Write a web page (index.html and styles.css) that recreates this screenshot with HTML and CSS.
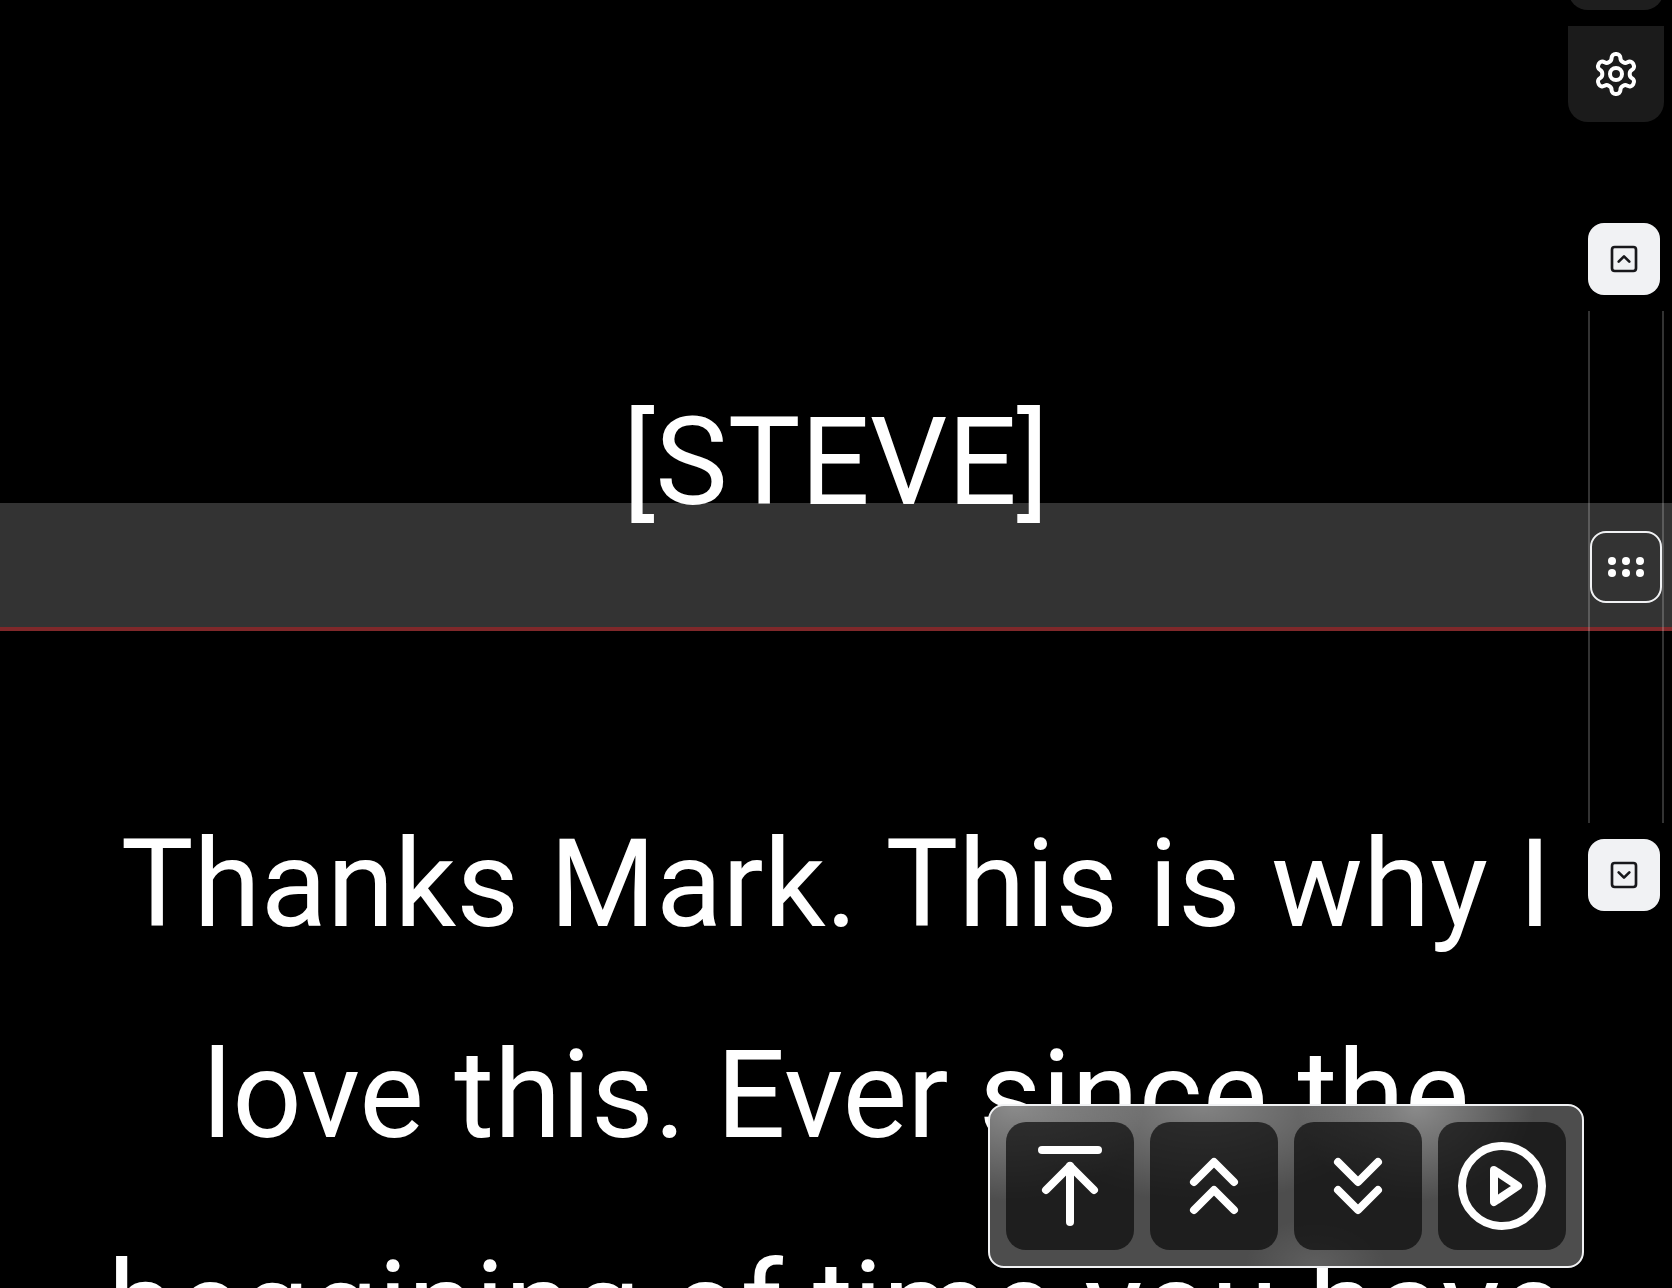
FILE: index.html
```
<!DOCTYPE html>
<html lang="en">
<head>
  <meta charset="UTF-8">
  <meta name="viewport" content="width=device-width, initial-scale=1.0">
  <title>Teleprompter</title>
  <link rel="stylesheet" href="styles.css">
</head>
<body>
  <div class="reading-band"></div>

  <main class="script">
    <p>[STEVE]</p>
    <p>Thanks Mark. This is why I love this. Ever since the beggining of time you have</p>
  </main>

  <div class="side-menu">
    <button class="menu-btn" aria-label="Menu"></button>
    <button class="menu-btn settings-btn" aria-label="Settings">
      <svg class="icon" viewBox="0 0 24 24">
        <path d="M12.22 2h-.44a2 2 0 0 0-2 2v.18a2 2 0 0 1-1 1.73l-.43.25a2 2 0 0 1-2 0l-.15-.08a2 2 0 0 0-2.73.73l-.22.38a2 2 0 0 0 .73 2.73l.15.1a2 2 0 0 1 1 1.72v.51a2 2 0 0 1-1 1.74l-.15.09a2 2 0 0 0-.73 2.73l.22.38a2 2 0 0 0 2.73.73l.15-.08a2 2 0 0 1 2 0l.43.25a2 2 0 0 1 1 1.73V20a2 2 0 0 0 2 2h.44a2 2 0 0 0 2-2v-.18a2 2 0 0 1 1-1.73l.43-.25a2 2 0 0 1 2 0l.15.08a2 2 0 0 0 2.73-.73l.22-.39a2 2 0 0 0-.73-2.73l-.15-.08a2 2 0 0 1-1-1.74v-.5a2 2 0 0 1 1-1.74l.15-.09a2 2 0 0 0 .73-2.73l-.22-.38a2 2 0 0 0-2.73-.73l-.15.08a2 2 0 0 1-2 0l-.43-.25a2 2 0 0 1-1-1.73V4a2 2 0 0 0-2-2z"/>
        <circle cx="12" cy="12" r="3"/>
      </svg>
    </button>
  </div>

  <div class="scroller">
    <button class="step-btn" aria-label="Scroll up">
      <svg class="icon" viewBox="0 0 24 24">
        <rect x="3" y="3" width="18" height="18" rx="2"/>
        <path d="m8 14 4-4 4 4"/>
      </svg>
    </button>
    <div class="track">
      <button class="thumb" aria-label="Drag to scroll">
        <svg viewBox="0 0 36 20">
          <circle cx="4" cy="4" r="4"/>
          <circle cx="18" cy="4" r="4"/>
          <circle cx="32" cy="4" r="4"/>
          <circle cx="4" cy="16" r="4"/>
          <circle cx="18" cy="16" r="4"/>
          <circle cx="32" cy="16" r="4"/>
        </svg>
      </button>
    </div>
    <button class="step-btn" aria-label="Scroll down">
      <svg class="icon" viewBox="0 0 24 24">
        <rect x="3" y="3" width="18" height="18" rx="2"/>
        <path d="m16 10-4 4-4-4"/>
      </svg>
    </button>
  </div>

  <div class="controls">
    <button class="control-btn" aria-label="Back to top">
      <svg class="icon" viewBox="0 0 24 24">
        <path d="M5 3h14"/>
        <path d="m18 13-6-6-6 6"/>
        <path d="M12 7v14"/>
      </svg>
    </button>
    <button class="control-btn" aria-label="Slower">
      <svg class="icon" viewBox="0 0 24 24">
        <path d="m17 11-5-5-5 5"/>
        <path d="m17 18-5-5-5 5"/>
      </svg>
    </button>
    <button class="control-btn" aria-label="Faster">
      <svg class="icon" viewBox="0 0 24 24">
        <path d="m7 6 5 5 5-5"/>
        <path d="m7 13 5 5 5-5"/>
      </svg>
    </button>
    <button class="control-btn" aria-label="Play">
      <svg class="icon" viewBox="0 0 24 24">
        <circle cx="12" cy="12" r="10"/>
        <polygon points="10 8 16 12 10 16"/>
      </svg>
    </button>
  </div>
</body>
</html>
```

FILE: styles.css
```
* {
  margin: 0;
  padding: 0;
  box-sizing: border-box;
}
body {
  height: 100vh;
  overflow: hidden;
  background-color: #000;
  color: #fff;
  font-family: 'Roboto', sans-serif;
}
button {
  display: flex;
  justify-content: center;
  align-items: center;
  border: none;
  color: #fff;
  cursor: pointer;
}
.icon {
  fill: none;
  stroke: currentColor;
  stroke-width: 2;
  stroke-linecap: round;
  stroke-linejoin: round;
}

/* script text */
.script {
  padding: 357px 88px 0;
  font-size: 122px;
  line-height: 211px;
  text-align: center;
}
.script p {
  position: relative;
  margin-bottom: 211px;
}

/* highlighted reading line */
.reading-band {
  position: fixed;
  top: 503px;
  left: 0;
  right: 0;
  height: 128px;
  background-color: #333;
  border-bottom: 4px solid #7f282a;
}

/* settings menu, top right */
.side-menu {
  position: fixed;
  top: -86px;
  right: 8px;
  display: flex;
  flex-direction: column;
  gap: 16px;
}
.menu-btn {
  width: 96px;
  height: 96px;
  background-color: #1e1e1e;
  border-radius: 0 0 20px 20px;
}
.settings-btn {
  background-color: #1b1b1b;
}
.settings-btn .icon {
  width: 48px;
}

/* manual scroller */
.scroller {
  position: fixed;
  top: 223px;
  right: 8px;
  display: flex;
  flex-direction: column;
  gap: 16px;
}
.step-btn {
  width: 72px;
  height: 72px;
  background-color: #f1f2f4;
  color: #18181b;
  border-radius: 16px;
}
.step-btn .icon {
  width: 32px;
}
.track {
  display: flex;
  align-items: center;
  height: 512px;
  border-left: 2px solid rgba(255, 255, 255, 0.2);
  border-right: 2px solid rgba(255, 255, 255, 0.2);
}
.thumb {
  width: 72px;
  height: 72px;
  background-color: #333;
  border: 2px solid #f1f2f4;
  border-radius: 16px;
}
.thumb svg {
  width: 36px;
  fill: #fff;
}

/* playback controls, frosted panel over the text */
.controls {
  position: fixed;
  right: 88px;
  bottom: 20px;
  display: flex;
  gap: 16px;
  padding: 16px;
  background-color: #4d4d4d;
  background-image:
    radial-gradient(ellipse 22% 60% at 4% 0, rgba(255, 255, 255, 0.35), transparent),
    radial-gradient(ellipse 32% 60% at 36% 0, rgba(255, 255, 255, 0.3), transparent),
    radial-gradient(ellipse 20% 60% at 72% 0, rgba(255, 255, 255, 0.35), transparent),
    radial-gradient(ellipse 12% 30% at 55% 100%, rgba(255, 255, 255, 0.1), transparent);
  border: 2px solid #f1f2f4;
  border-radius: 16px;
}
.control-btn {
  width: 128px;
  height: 128px;
  background-color: rgba(10, 10, 10, 0.7);
  border-radius: 20px;
}
.control-btn .icon {
  width: 96px;
}
```
